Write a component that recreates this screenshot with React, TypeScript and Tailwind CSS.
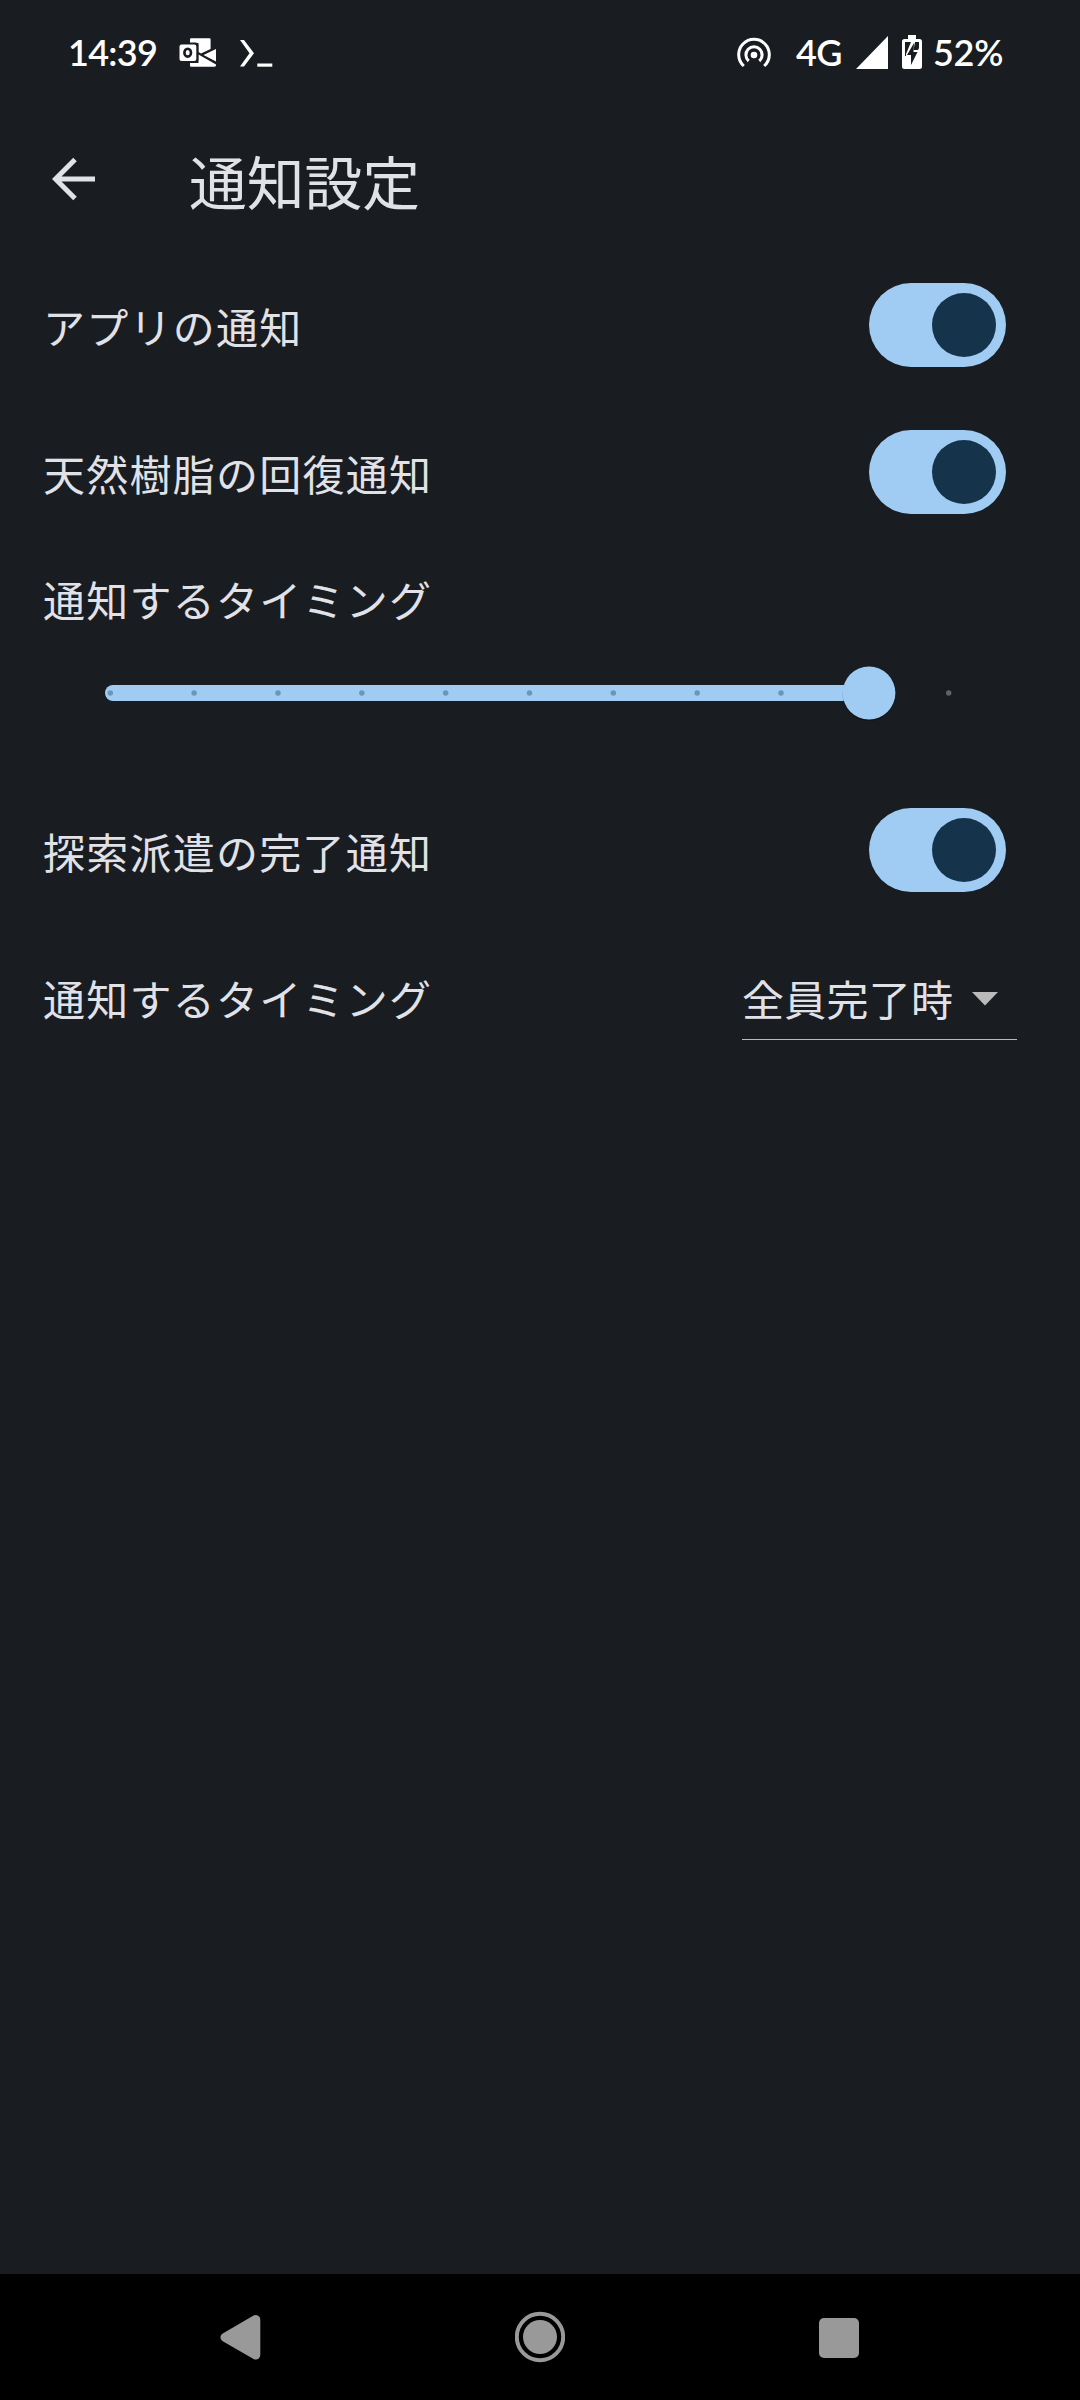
import React from 'react';

function StatusBar() {
  return (
    <div className="flex h-[104px] items-center pl-[68px] pr-[76px] font-['Lato',sans-serif] text-[36px] font-semibold leading-[44px] tracking-[-0.700px] text-white">
      <span className="-mt-px w-[89px] whitespace-nowrap">14:39</span>
      <svg className="ml-[22px] h-[32px] w-[38px] shrink-0" viewBox="0 -1 38 32" fill="none">
        <path d="M11 2.500Q11 1.300 12 1.300H30.500Q31.600 1.300 31.600 2.500V12L22 16.500L19.500 15V6H11Z" fill="#fff" />
        <path d="M24.500 18L37 12V24.500Z" fill="#fff" />
        <path d="M19.500 17.500L37 27.500V28.500Q36.500 29.700 35.500 29.700H12Q11 29.700 11 28.500V26H19.500Z" fill="#fff" />
        <rect x="-1.500" y="5.600" width="20.800" height="20.200" rx="3" fill="#191c20" />
        <rect x="0.500" y="7.500" width="16.800" height="16.500" rx="2" fill="#fff" />
        <ellipse cx="8.700" cy="15.700" rx="3.300" ry="3.900" stroke="#191c20" strokeWidth="2.600" />
      </svg>
      <svg className="ml-[22px] h-[32px] w-[36px] shrink-0" viewBox="0 -1 36 32" fill="#fff">
        <path d="M1 3H5L15 16.300L5 29.600H1L10.500 16.300Z" />
        <path d="M18.300 26.500H33.300V29.700H18.300Z" />
      </svg>
      <div className="flex-1" />
      <svg className="mr-[24px] h-[36px] w-[36px] shrink-0" viewBox="0 0 36 36" fill="none" stroke="#fff" strokeWidth="3">
        <path d="M7.800 32A15.300 15.300 0 1 1 28.200 32" />
        <path d="M12.700 27A8.100 8.100 0 1 1 23.300 27" />
        <circle cx="18" cy="21" r="3.300" fill="#fff" stroke="none" />
      </svg>
      <span className="-mt-px w-[49px] whitespace-nowrap">4G</span>
      <svg className="ml-[10px] h-[34px] w-[34px] shrink-0" viewBox="0 0 34 34">
        <path d="M1 34H33V1Z" fill="#fff" />
      </svg>
      <svg className="ml-[12px] mr-[10px] h-[36px] w-[22px] shrink-0" viewBox="0 0 22 36">
        <path d="M7 1H15V5H18.500Q21 5 21 7.500V32.500Q21 35 18.500 35H3.500Q1 35 1 32.500V7.500Q1 5 3.500 5H7Z" fill="#fff" />
        <path d="M4 8H10L5 20V22H4ZM18 8H14L12.500 16H17L18 14Z" fill="#191c20" />
        <path d="M13 9L6 21H10V31L16.500 18H12.500Z" fill="#191c20" />
      </svg>
      <span className="-mt-px w-[71px] whitespace-nowrap tracking-[-0.300px]">52%</span>
    </div>
  );
}

function Toggle() {
  return (
    <div role="switch" aria-checked="true" className="mt-px flex h-[84px] w-[137px] items-center justify-end rounded-full bg-[#a0ccf4] pr-[10.500px]">
      <div className="size-[63.500px] rounded-full bg-[#15334b]" />
    </div>
  );
}

function SwitchRow({ label }: { label: string }) {
  return (
    <div className="flex h-[147px] items-center justify-between pl-[43px] pr-[74px]">
      <span className="mt-[3px] whitespace-nowrap">{label}</span>
      <Toggle />
    </div>
  );
}

const ticks = Array.from({ length: 11 }, (_, i) => 5.3 + i * 83.84);

function Slider() {
  return (
    <svg className="mx-[105px] h-[60px] w-[870px]" viewBox="0 0 870 60">
      <rect x="0" y="22" width="770" height="16" rx="8" fill="#a0ccf4" />
      {ticks.map((x, i) => (
        <circle key={i} cx={x} cy="30" r="2.750" fill={i === 10 ? '#606266' : '#6b97b6'} />
      ))}
      <circle cx="764" cy="31.500" r="26.500" fill="#000" opacity="0.250" />
      <circle cx="764" cy="30" r="26.400" fill="#a0ccf4" />
    </svg>
  );
}

function NavBar() {
  return (
    <div className="flex h-[126px] items-center bg-black">
      <svg className="ml-[220px] h-[46px] w-[42px]" viewBox="0 0 42 46">
        <path d="M5 23.300L35.800 5.500V41.100Z" fill="#999" stroke="#999" strokeWidth="9" strokeLinejoin="round" />
      </svg>
      <svg className="ml-[253px] h-[52px] w-[50px]" viewBox="0 -1 50 52">
        <circle cx="25" cy="25" r="23.200" fill="none" stroke="#999" strokeWidth="4" />
        <circle cx="25" cy="25" r="17" fill="#999" />
      </svg>
      <div className="ml-[253.500px] mt-px size-[40px] rounded-[5px] bg-[#999]" />
    </div>
  );
}

export default function App() {
  return (
    <div className="flex h-[2400px] w-[1080px] flex-col overflow-hidden bg-[#191c20] font-['Noto_Sans_CJK_JP',sans-serif] text-[42px] leading-[60px] tracking-[1.260px] text-[#e1e2e8]">
      <StatusBar />
      <header className="flex h-[147px] items-center pl-[52px]">
        <svg className="mt-[2px] h-[44px] w-[44px]" viewBox="0 0 44 44" fill="none" stroke="#e1e2e8" strokeWidth="5">
          <path d="M43 22H4M23 2.500L3.500 22L23 41.500" />
        </svg>
        <h1 className="ml-[93px] mt-[5px] text-[57.750px] leading-[74px] tracking-normal">通知設定</h1>
      </header>
      <main className="flex-1">
        <SwitchRow label="アプリの通知" />
        <SwitchRow label="天然樹脂の回復通知" />
        <div className="flex h-[118px] items-center pb-[10px] pl-[43px]">通知するタイミング</div>
        <Slider />
        <div className="h-[53px]" />
        <SwitchRow label="探索派遣の完了通知" />
        <div className="flex h-[147px] items-center justify-between pl-[43px] pr-[63px]">
          <span className="mt-[3px]">通知するタイミング</span>
          <div className="mt-[2px] flex h-[85px] w-[275px] items-center border-b border-[#b5bcb9]">
            <span className="mt-[2px] whitespace-nowrap tracking-[0.260px]">全員完了時</span>
            <svg className="ml-[18px] mt-[4px] h-[14px] w-[28px]" viewBox="0 0 28 14">
              <path d="M1 0H27L14 13.500Z" fill="#bababb" />
            </svg>
          </div>
        </div>
      </main>
      <NavBar />
    </div>
  );
}
